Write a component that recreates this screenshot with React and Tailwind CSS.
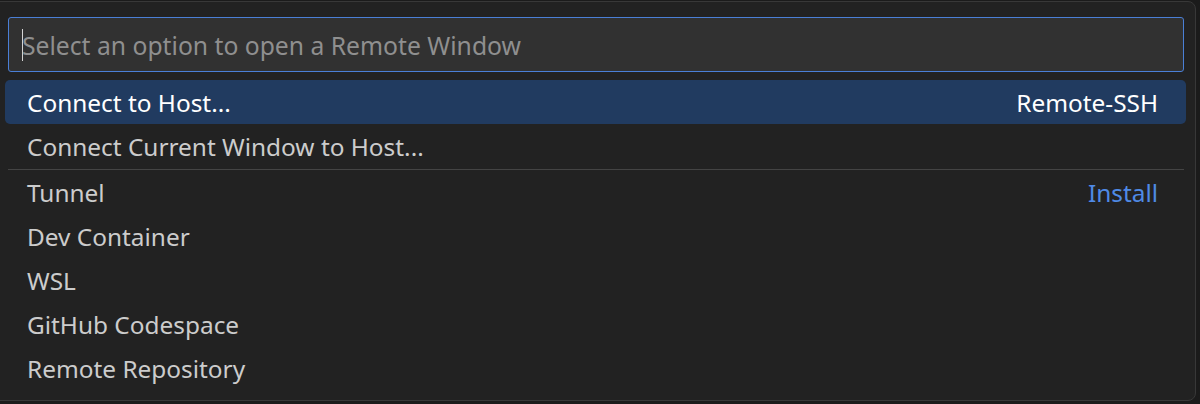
import React from "react";

const items = [
  { label: "Connect to Host...", detail: "Remote-SSH", selected: true },
  { label: "Connect Current Window to Host..." },
  { separator: true },
  { label: "Tunnel", action: "Install" },
  { label: "Dev Container" },
  { label: "WSL" },
  { label: "GitHub Codespace" },
  { label: "Remote Repository" },
];

const App = () => {
  return (
    <div
      className="w-[1200px] h-[404px] bg-[#1b1b1b] overflow-hidden"
      style={{ fontFamily: '"Noto Sans", "Open Sans", sans-serif' }}
    >
      <div className="ml-[-8px] mt-px w-[1204px] h-[400px] rounded-lg border border-[#383838] bg-[#222222] flex flex-col">
        {/* Search box */}
        <div className="pl-[15px] pr-[11px] pt-[15px]">
          <div className="h-[55px] rounded-[3px] border border-[#4a7fd6] bg-[#313131] flex items-center pl-[13px]">
            <span className="w-px h-[32px] bg-[#d4d4d4]" />
            <span className="text-[24.7px] text-[#8f8f8f] leading-none -ml-px pt-[4px]">
              Select an option to open a Remote Window
            </span>
          </div>
        </div>

        {/* Options */}
        <div className="pl-[12px] pr-[9px] pt-[8px] flex flex-col">
          {items.map((item, i) =>
            item.separator ? (
              <div key={i} className="pl-[3px] pr-[2px] pt-px">
                <div className="h-px bg-[#444444]" />
              </div>
            ) : (
              <div
                key={i}
                className={`h-[44px] flex items-center justify-between pl-[22px] pr-[28px] pt-[2px] rounded-[5px] text-[24.4px] leading-none ${
                  item.selected ? "bg-[#213b60] text-white" : "text-[#cccccc]"
                }`}
              >
                <span>{item.label}</span>
                {item.detail && <span>{item.detail}</span>}
                {item.action && <span className="text-[#4f8ae6]">{item.action}</span>}
              </div>
            )
          )}
        </div>
      </div>
    </div>
  );
};

export default App;
